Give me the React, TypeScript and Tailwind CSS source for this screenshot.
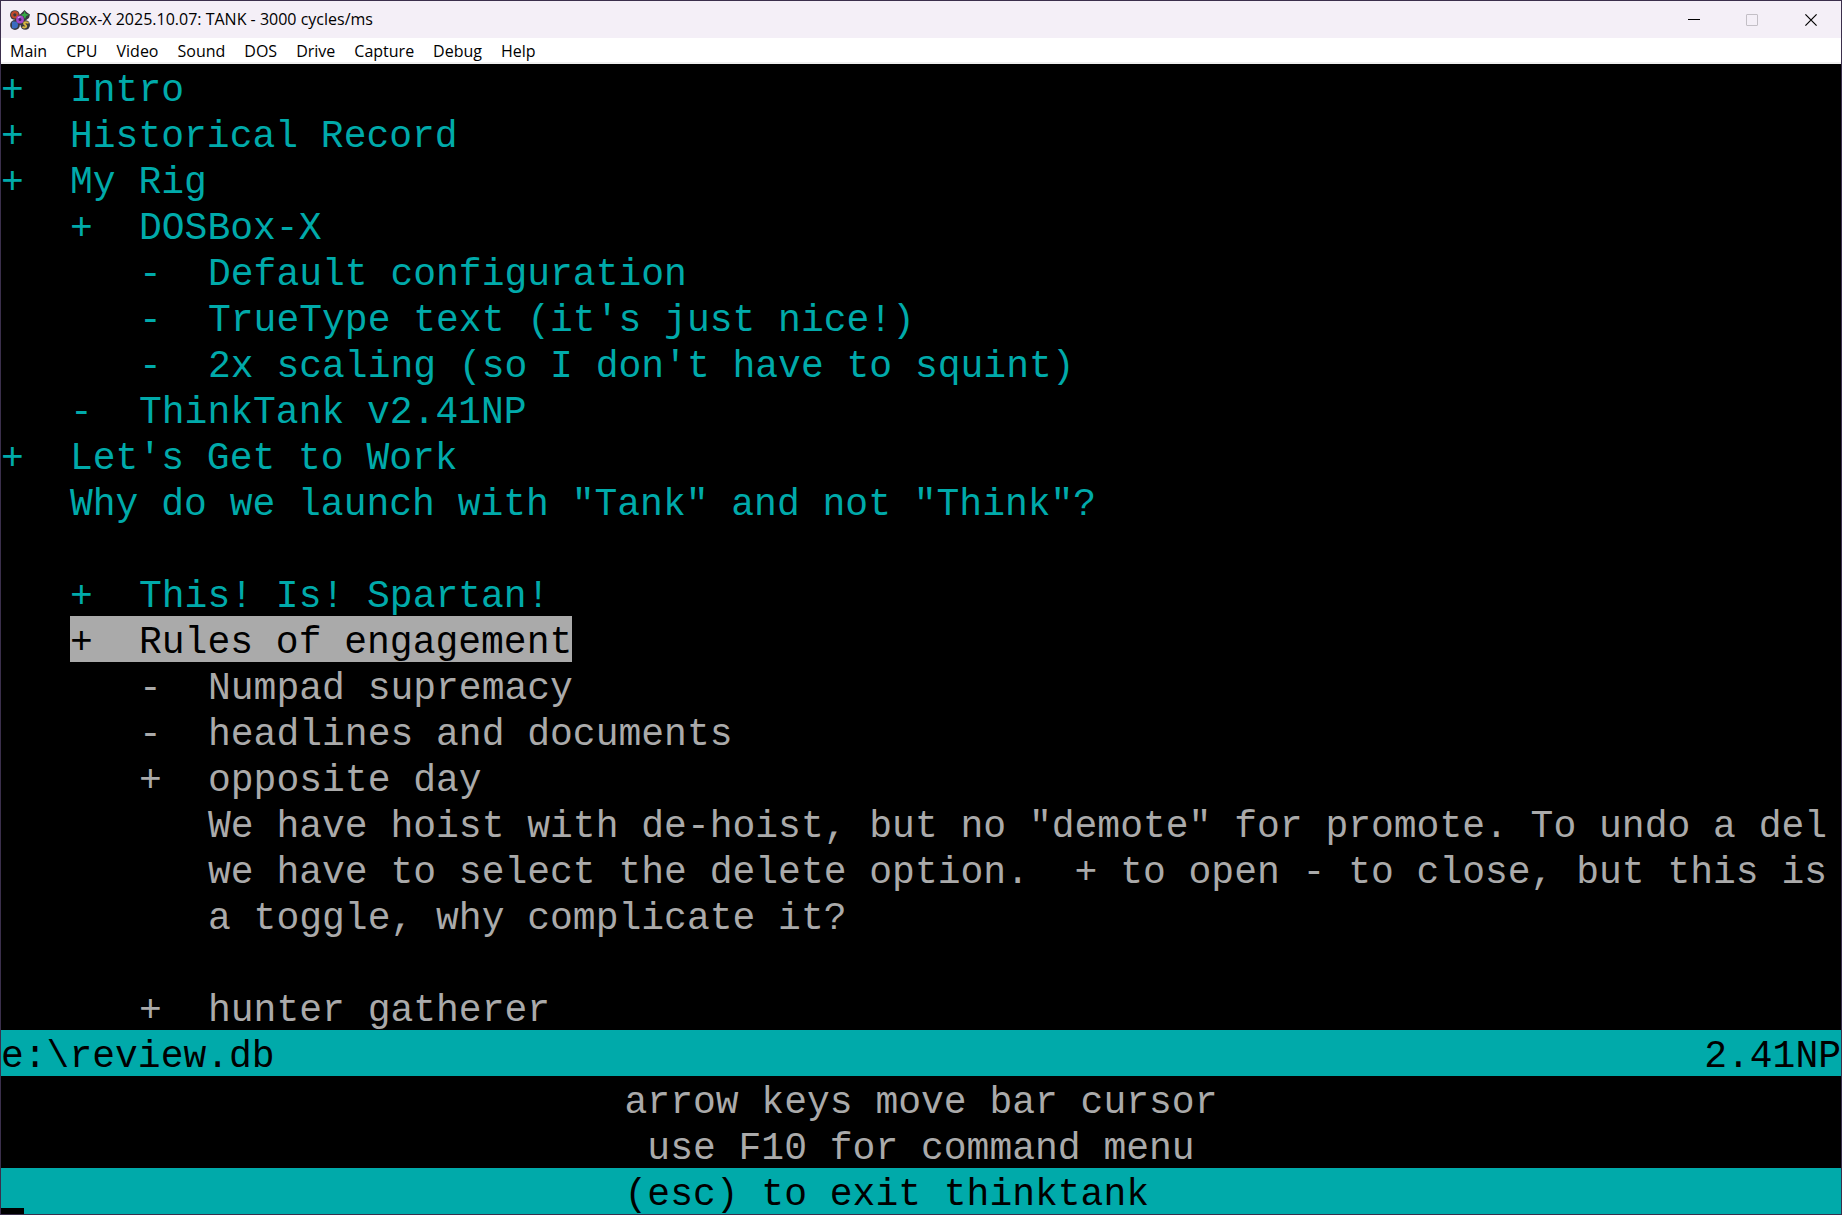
const menus = ["Main", "CPU", "Video", "Sound", "DOS", "Drive", "Capture", "Debug", "Help"];

type Tone = "cyan" | "gray" | "selected";

type Row = { indent: 0 | 3 | 6; mark: "+" | "-" | " "; text: string; tone: Tone };

const rows: Row[] = [
  { indent: 0, mark: "+", text: "Intro", tone: "cyan" },
  { indent: 0, mark: "+", text: "Historical Record", tone: "cyan" },
  { indent: 0, mark: "+", text: "My Rig", tone: "cyan" },
  { indent: 3, mark: "+", text: "DOSBox-X", tone: "cyan" },
  { indent: 6, mark: "-", text: "Default configuration", tone: "cyan" },
  { indent: 6, mark: "-", text: "TrueType text (it's just nice!)", tone: "cyan" },
  { indent: 6, mark: "-", text: "2x scaling (so I don't have to squint)", tone: "cyan" },
  { indent: 3, mark: "-", text: "ThinkTank v2.41NP", tone: "cyan" },
  { indent: 0, mark: "+", text: "Let's Get to Work", tone: "cyan" },
  { indent: 0, mark: " ", text: "Why do we launch with \"Tank\" and not \"Think\"?", tone: "cyan" },
  { indent: 0, mark: " ", text: "", tone: "cyan" },
  { indent: 3, mark: "+", text: "This! Is! Spartan!", tone: "cyan" },
  { indent: 3, mark: "+", text: "Rules of engagement", tone: "selected" },
  { indent: 6, mark: "-", text: "Numpad supremacy", tone: "gray" },
  { indent: 6, mark: "-", text: "headlines and documents", tone: "gray" },
  { indent: 6, mark: "+", text: "opposite day", tone: "gray" },
  { indent: 6, mark: " ", text: "We have hoist with de-hoist, but no \"demote\" for promote. To undo a del", tone: "gray" },
  { indent: 6, mark: " ", text: "we have to select the delete option.  + to open - to close, but this is", tone: "gray" },
  { indent: 6, mark: " ", text: "a toggle, why complicate it?", tone: "gray" },
  { indent: 6, mark: " ", text: "", tone: "gray" },
  { indent: 6, mark: "+", text: "hunter gatherer", tone: "gray" },
];

const toneClass: Record<Tone, string> = {
  cyan: "text-[#00aaaa]",
  gray: "text-[#aaaaaa]",
  selected: "bg-[#aaaaaa] text-black",
};

const indentClass: Record<Row["indent"], string> = {
  0: "pl-0",
  3: "pl-[69px]",
  6: "pl-[138px]",
};

function AppIcon() {
  return (
    <svg className="size-5 shrink-0" viewBox="0 0 20 20" aria-hidden="true">
      <g fill="#3a3a40">
        <circle cx="4.8" cy="5" r="4.8" />
        <path d="M14.5 0 17 2.500 20 4.500 19 8 15.500 10.500 11 8.500 10 4.500Z" />
        <circle cx="10" cy="9.700" r="5.200" />
        <circle cx="5" cy="15" r="4.900" />
        <circle cx="15.200" cy="15" r="4.800" />
      </g>
      <circle cx="4.8" cy="4.800" r="2.700" fill="none" stroke="#c04a2c" strokeWidth="2.200" />
      <path d="M14.500 1 15.800 3.700 19 4.700 16.200 6 15 9 13.400 6.200 10.800 5 13.500 3.700Z" fill="#36a845" />
      <path d="M3 12.500v5h1.500a2.500 2.500 0 0 0 0-5Z" fill="#3b6cc0" stroke="#3b6cc0" strokeWidth="2" strokeLinejoin="round" />
      <path d="M17.800 12.600c-3-1.200-4.800.6-2.800 2s1.800 3.200-1.800 2.700" stroke="#d9b640" strokeWidth="2" strokeLinecap="round" fill="none" />
      <circle cx="10" cy="9.500" r="2.700" fill="#4a1d66" stroke="#a546c8" strokeWidth="2.400" />
      <path d="M8.300 7.600 10 6.800" stroke="#dba9ee" strokeWidth="1" strokeLinecap="round" />
    </svg>
  );
}

function TitleBar() {
  return (
    <header className="flex h-[37px] items-center bg-[#f4eff7] pl-[9px] text-black">
      <AppIcon />
      <h1 className="ml-[6px] flex-1 pb-[2px] text-[16px] leading-5">DOSBox-X 2025.10.07: TANK - 3000 cycles/ms</h1>
      <button type="button" aria-label="Minimize" className="flex h-full w-[58px] items-center justify-center">
        <svg className="size-3" viewBox="0 0 12 12" shapeRendering="crispEdges">
          <path d="M0 5.500H12" stroke="#000" />
        </svg>
      </button>
      <button type="button" aria-label="Maximize" disabled className="flex h-full w-[58px] items-center justify-center">
        <svg className="size-3" viewBox="0 0 12 12">
          <rect x="0.500" y="0.500" width="11" height="11" rx="0.500" fill="none" stroke="#c3bfc6" />
        </svg>
      </button>
      <button type="button" aria-label="Close" className="flex h-full w-[60px] items-center justify-center">
        <svg className="size-3" viewBox="0 0 12 12">
          <path d="M0.400 0.400 11.600 11.600M11.600 0.400 0.400 11.600" stroke="#000" strokeWidth="1.200" />
        </svg>
      </button>
    </header>
  );
}

function MenuBar() {
  return (
    <nav aria-label="Main menu" className="flex h-[26px] items-center gap-[19px] border-b-2 border-[#f0f0f0] bg-white pt-[2px] pl-[9px] text-[16px] leading-5 text-black">
      {menus.map((name) => (
        <button type="button" key={name}>
          {name}
        </button>
      ))}
    </nav>
  );
}

function OutlineRow({ row }: { row: Row }) {
  return (
    <li className={`flex h-[46px] ${indentClass[row.indent]}`}>
      <div className={`flex shrink-0 pt-2 ${toneClass[row.tone]}`}>
        <span className="w-[69px]">{row.mark}</span>
        <span>{row.text}</span>
      </div>
    </li>
  );
}

export default function App() {
  return (
    <div className="flex min-h-screen flex-col border border-[#3b2f4c] bg-black font-['Open_Sans','Noto_Sans',sans-serif]">
      <TitleBar />
      <MenuBar />
      <main className="whitespace-pre font-['Liberation_Mono',monospace] text-[38px] leading-[38px]">
        <ul>
          {rows.map((row, i) => (
            <OutlineRow key={i} row={row} />
          ))}
        </ul>
        <div className="flex justify-between bg-[#00aaaa] pt-2 text-black">
          <span>{"e:\\review.db"}</span>
          <span>2.41NP</span>
        </div>
        <div className="flex flex-col items-center text-[#aaaaaa]">
          <p className="pt-2">arrow keys move bar cursor</p>
          <p className="pt-2">use F10 for command menu</p>
        </div>
        <div className="relative flex justify-center bg-[#00aaaa] pt-2 text-black">
          <p>{"(esc) to exit thinktank   "}</p>
          <span className="absolute bottom-0 left-0 h-[6px] w-[23px] bg-black" />
        </div>
      </main>
    </div>
  );
}
